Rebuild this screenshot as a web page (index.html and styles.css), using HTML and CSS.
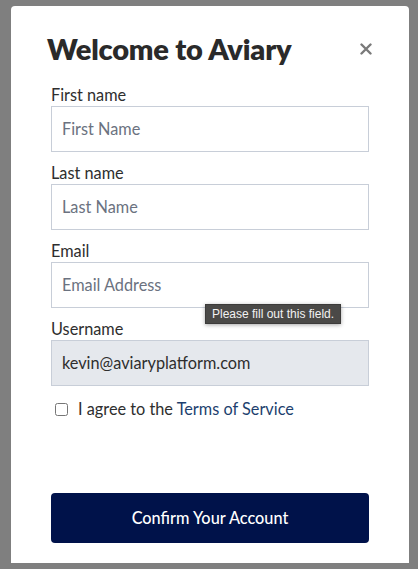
FILE: index.html
```html
<!DOCTYPE html>
<html lang="en">
<head>
<meta charset="utf-8">
<title>Welcome to Aviary</title>
<link rel="stylesheet" href="styles.css">
</head>
<body>
<div class="modal">
  <div class="modal-header">
    <h1 class="title">Welcome to Aviary</h1>
    <button class="close" aria-label="Close">
      <svg width="12" height="12" viewBox="0 0 12 12"><path d="M1.5 1.5L10.5 10.5M10.5 1.5L1.5 10.5" stroke="#7a7a7a" stroke-width="2.4" stroke-linecap="round"/></svg>
    </button>
  </div>
  <form class="form">
    <div class="field">
      <label class="label">First name</label>
      <input class="input" type="text" placeholder="First Name">
    </div>
    <div class="field">
      <label class="label">Last name</label>
      <input class="input" type="text" placeholder="Last Name">
    </div>
    <div class="field">
      <label class="label">Email</label>
      <input class="input" type="email" placeholder="Email Address">
      <div class="tooltip">Please fill out this field.</div>
    </div>
    <div class="field">
      <label class="label">Username</label>
      <input class="input input-disabled" type="text" value="kevin@aviaryplatform.com" readonly>
    </div>
    <label class="agree">
      <input class="checkbox" type="checkbox">
      <span>I agree to the <a class="link" href="#">Terms of Service</a></span>
    </label>
    <button class="submit" type="button">Confirm Your Account</button>
  </form>
</div>
</body>
</html>
```
FILE: styles.css
```css
html, body {
  margin: 0;
  padding: 0;
  background: #7f7f7f;
}
body {
  padding: 6px 9px 0 11px;
  font-family: "Lato", "Noto Sans", sans-serif;
  color: #2e2e2e;
}
.modal {
  width: 398px;
  height: 557px;
  box-sizing: border-box;
  background: #ffffff;
  border-radius: 4px 4px 0 0;
  padding: 25px 40px 20px 40px;
  display: flex;
  flex-direction: column;
}
.modal-header {
  display: flex;
  align-items: center;
  justify-content: space-between;
  height: 36px;
}
.title {
  margin: 0 0 0 -4px;
  font-size: 29px;
  line-height: 36px;
  font-weight: 800;
  color: #2a2a2a;
  letter-spacing: -0.2px;
}
.close {
  border: 0;
  background: none;
  padding: 0;
  width: 12px;
  height: 12px;
  margin-right: -3px;
  display: flex;
}
.form {
  display: flex;
  flex-direction: column;
  flex: 1;
  margin-top: 18px;
}
.field {
  position: relative;
  display: flex;
  flex-direction: column;
  margin-bottom: 11px;
}
.label {
  font-size: 16.3px;
  line-height: 20px;
  margin-bottom: 1px;
  color: #2e2e2e;
}
.input {
  height: 46px;
  box-sizing: border-box;
  border: 1px solid #c8ced8;
  border-radius: 0;
  padding: 0 10px 1px 10px;
  font-family: "Lato", "Noto Sans", sans-serif;
  font-size: 16.3px;
  color: #333333;
  background: #ffffff;
  outline: none;
}
.input::placeholder {
  color: #6b7280;
}
.input-disabled {
  background: #e5e8ed;
  color: #2e2e2e;
}
.tooltip {
  position: absolute;
  left: 154px;
  top: 63px;
  height: 20px;
  box-sizing: border-box;
  padding: 0 6px;
  background: #4a4947;
  border: 1px solid #3c3b3a;
  color: #f2f2f2;
  font-family: "Liberation Sans", Arial, sans-serif;
  font-size: 12px;
  line-height: 18px;
  box-shadow: 0 1px 4px rgba(0, 0, 0, 0.35);
  white-space: nowrap;
}
.agree {
  display: flex;
  align-items: center;
  margin-top: 2px;
  font-size: 16.3px;
  line-height: 20px;
  color: #2e2e2e;
}
.checkbox {
  margin: 0 10px 0 4px;
  width: 13px;
  height: 13px;
}
.link {
  color: #1d3f6e;
  text-decoration: none;
}
.submit {
  margin-top: auto;
  height: 50px;
  border: 0;
  border-radius: 4px;
  background: #00124a;
  color: #ffffff;
  font-family: "Lato", "Noto Sans", sans-serif;
  font-size: 16.3px;
  font-weight: 500;
  padding-bottom: 2px;
}
```
